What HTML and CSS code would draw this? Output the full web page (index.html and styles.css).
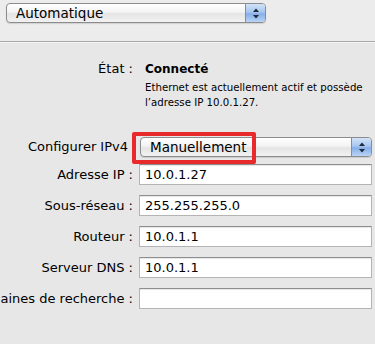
FILE: index.html
```html
<!DOCTYPE html>
<html lang="fr">
<head>
<meta charset="utf-8">
<link rel="stylesheet" href="styles.css">
</head>
<body>
<div class="top">
  <div class="popup popup-top">
    <span class="popup-text">Automatique</span>
    <span class="stepper"><svg width="8" height="11" viewBox="0 0 8 11"><path d="M4 0.5 L7 4 L1 4 Z M4 10.5 L7 7 L1 7 Z" fill="#1d2a3a"/></svg></span>
  </div>
</div>
<div class="panel">
  <div class="status">
    <div class="label">État :</div>
    <div class="status-value">
      <div class="connected">Connecté</div>
      <div class="desc">Ethernet est actuellement actif et possède<br>l’adresse IP 10.0.1.27.</div>
    </div>
  </div>
  <div class="form">
    <div class="row row-config">
      <div class="label"><span>Configurer IPv4</span></div>
      <div class="popup popup-config">
        <span class="popup-text">Manuellement</span>
        <span class="stepper"><svg width="8" height="11" viewBox="0 0 8 11"><path d="M4 0.5 L7 4 L1 4 Z M4 10.5 L7 7 L1 7 Z" fill="#1d2a3a"/></svg></span>
        <div class="highlight"></div>
      </div>
    </div>
    <div class="row">
      <div class="label"><span>Adresse IP :</span></div>
      <div class="field">10.0.1.27</div>
    </div>
    <div class="row">
      <div class="label"><span>Sous-réseau :</span></div>
      <div class="field">255.255.255.0</div>
    </div>
    <div class="row">
      <div class="label"><span>Routeur :</span></div>
      <div class="field">10.0.1.1</div>
    </div>
    <div class="row">
      <div class="label"><span>Serveur DNS :</span></div>
      <div class="field">10.0.1.1</div>
    </div>
    <div class="row">
      <div class="label"><span>Domaines de recherche :</span></div>
      <div class="field"></div>
    </div>
  </div>
</div>
</body>
</html>
```
FILE: styles.css
```css
html, body {
  margin: 0;
  padding: 0;
}
body {
  width: 375px;
  height: 344px;
  overflow: hidden;
  background: #e7e7e7;
  font-family: "DejaVu Sans", sans-serif;
  font-size: 13px;
  color: #000;
}
.top {
  height: 42px;
  background: #ececec;
  border-bottom: 1px solid #a9a9a9;
  box-shadow: 0 1px 0 #f4f4f4;
  padding: 3px 0 0 6px;
  box-sizing: border-box;
}
.popup {
  position: relative;
  display: flex;
  align-items: center;
  height: 20px;
  box-sizing: border-box;
  border: 1px solid #8c8c8c;
  border-radius: 4px;
  background: linear-gradient(#ffffff 0%, #f3f3f3 45%, #e4e4e4 55%, #f2f2f2 100%);
  box-shadow: 0 1px 1px rgba(0,0,0,0.12);
}
.popup-top {
  width: 260px;
}
.popup-text {
  flex: 1;
  padding-left: 9px;
  font-size: 13.5px;
  line-height: 18px;
}
.stepper {
  width: 19px;
  height: 18px;
  display: flex;
  align-items: center;
  justify-content: center;
  border-left: 1px solid #7d8fa8;
  border-radius: 0 3px 3px 0;
  background: linear-gradient(#d2e3f8 0%, #a8c6ef 45%, #86aee8 55%, #b9d4f6 100%);
}
.panel {
  padding: 0 3px 0 0;
}
.status {
  display: flex;
  margin-top: 19px;
}
.label {
  width: 133px;
  flex: none;
  display: flex;
  justify-content: flex-end;
  white-space: nowrap;
  font-size: 13px;
  line-height: 16px;
}
.status-value {
  margin-left: 12px;
}
.connected {
  font-weight: bold;
  font-size: 12px;
  line-height: 16px;
}
.desc {
  margin-top: 3px;
  font-size: 10.2px;
  line-height: 15px;
}
.form {
  margin-top: 27px;
  display: flex;
  flex-direction: column;
  gap: 10px;
}
.row {
  display: flex;
  align-items: center;
  gap: 6px;
}
.row-config {
  margin-bottom: -3px;
}
.row-config .label {
  width: 128px;
}
.popup-config {
  flex: 1;
  margin-left: 6px;
}
.highlight {
  position: absolute;
  left: -9px;
  top: -6px;
  width: 124px;
  height: 32px;
  box-sizing: border-box;
  border: 4px solid #e82a2d;
  border-radius: 2px;
}
.field {
  flex: 1;
  height: 21px;
  box-sizing: border-box;
  background: #fff;
  border: 1px solid #b4b4b4;
  border-top-color: #8e8e8e;
  box-shadow: inset 0 1px 1px rgba(0,0,0,0.1);
  padding-left: 5px;
  font-size: 13px;
  line-height: 19px;
}
```
